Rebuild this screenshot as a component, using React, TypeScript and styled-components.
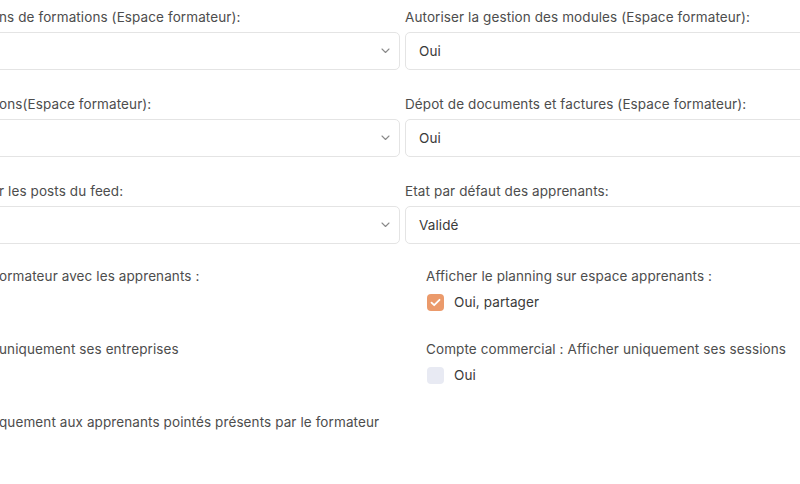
import React from "react";
import styled, { createGlobalStyle } from "styled-components";

const Global = createGlobalStyle`
  html, body { margin: 0; padding: 0; background: #fff; overflow: hidden; }
  body { font-family: Inter, "Open Sans", sans-serif; width: 800px; height: 484px; }
`;

const Page = styled.div`
  width: 800px;
  height: 484px;
  overflow: hidden;
  padding-top: 7px;
  box-sizing: border-box;
`;

const Grid = styled.div`
  display: grid;
  grid-template-columns: 410px 420px;
  column-gap: 5px;
  margin-left: -10px;
`;

const Field = styled.div`
  display: flex;
  flex-direction: column;
  margin-bottom: 24px;
`;

const Label = styled.div<{ $cut?: boolean; $indent?: number }>`
  font-size: 13.5px;
  letter-spacing: 0.1px;
  line-height: 20px;
  color: #4d4d4d;
  white-space: nowrap;
  padding-left: ${(p) => (p.$cut ? "9px" : `${p.$indent ?? 0}px`)};
  margin-bottom: 5px;
`;

const Select = styled.div`
  height: 38px;
  box-sizing: border-box;
  border: 1px solid #e4e4e4;
  border-radius: 5px;
  display: flex;
  align-items: center;
  justify-content: space-between;
  padding: 0 9px 0 13px;
  font-size: 13.5px;
  letter-spacing: 0.1px;
  color: #3a3a3a;
  background: #fff;
`;

const Chevron = () => (
  <svg width="9" height="6" viewBox="0 0 9 6" fill="none">
    <path d="M1 1l3.5 3.5L8 1" stroke="#8a8a8a" strokeWidth="1.1" strokeLinecap="round" strokeLinejoin="round" />
  </svg>
);

const CheckField = styled.div`
  display: flex;
  flex-direction: column;
  min-height: 73px;
`;

const CheckRow = styled.label`
  display: flex;
  align-items: center;
  gap: 10px;
  padding-left: 22px;
  margin-top: 1px;
  font-size: 13.5px;
  letter-spacing: 0.1px;
  line-height: 20px;
  color: #3a3a3a;
`;

const Box = styled.span<{ $on?: boolean }>`
  width: 17px;
  height: 17px;
  border-radius: 4px;
  background: ${(p) => (p.$on ? "#eb9a6b" : "#e8eaf3")};
  display: inline-flex;
  align-items: center;
  justify-content: center;
`;

const CheckSection = styled(Grid)`
  margin-top: -2px;
`;

export default function App() {
  return (
    <Page>
      <Global />
      <Grid>
        <Field>
          <Label $cut>ns de formations (Espace formateur):</Label>
          <Select><span /><Chevron /></Select>
        </Field>
        <Field>
          <Label>Autoriser la gestion des modules (Espace formateur):</Label>
          <Select>Oui</Select>
        </Field>
        <Field>
          <Label $cut>ons(Espace formateur):</Label>
          <Select><span /><Chevron /></Select>
        </Field>
        <Field>
          <Label>Dépot de documents et factures (Espace formateur):</Label>
          <Select>Oui</Select>
        </Field>
        <Field>
          <Label $cut>r les posts du feed:</Label>
          <Select><span /><Chevron /></Select>
        </Field>
        <Field>
          <Label>Etat par défaut des apprenants:</Label>
          <Select>Validé</Select>
        </Field>
      </Grid>
      <CheckSection>
        <CheckField>
          <Label $cut>ormateur avec les apprenants :</Label>
        </CheckField>
        <CheckField>
          <Label $indent={21}>Afficher le planning sur espace apprenants :</Label>
          <CheckRow>
            <Box $on>
              <svg width="11" height="9" viewBox="0 0 11 9" fill="none">
                <path d="M1.5 4.6l2.7 2.6L9.5 1.8" stroke="#fff" strokeWidth="1.8" strokeLinecap="round" strokeLinejoin="round" />
              </svg>
            </Box>
            Oui, partager
          </CheckRow>
        </CheckField>
        <CheckField>
          <Label $cut>uniquement ses entreprises</Label>
        </CheckField>
        <CheckField>
          <Label $indent={21}>Compte commercial : Afficher uniquement ses sessions</Label>
          <CheckRow>
            <Box />
            Oui
          </CheckRow>
        </CheckField>
        <CheckField>
          <Label $cut>quement aux apprenants pointés présents par le formateur</Label>
        </CheckField>
      </CheckSection>
    </Page>
  );
}
